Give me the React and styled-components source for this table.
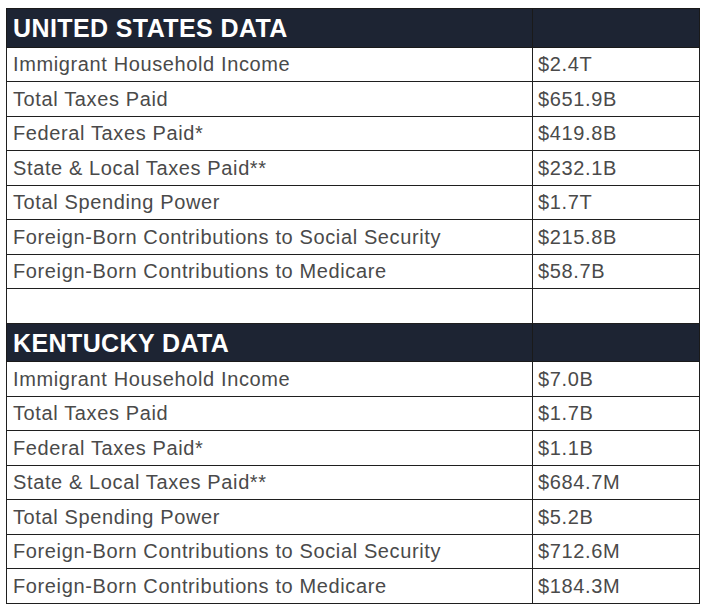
import styled, { createGlobalStyle } from "styled-components";

const Global = createGlobalStyle`
  html, body {
    margin: 0;
    padding: 0;
    background: #ffffff;
  }
`;

const us = [
  ["Immigrant Household Income", "$2.4T"],
  ["Total Taxes Paid", "$651.9B"],
  ["Federal Taxes Paid*", "$419.8B"],
  ["State & Local Taxes Paid**", "$232.1B"],
  ["Total Spending Power", "$1.7T"],
  ["Foreign-Born Contributions to Social Security", "$215.8B"],
  ["Foreign-Born Contributions to Medicare", "$58.7B"],
];

const ky = [
  ["Immigrant Household Income", "$7.0B"],
  ["Total Taxes Paid", "$1.7B"],
  ["Federal Taxes Paid*", "$1.1B"],
  ["State & Local Taxes Paid**", "$684.7M"],
  ["Total Spending Power", "$5.2B"],
  ["Foreign-Born Contributions to Social Security", "$712.6M"],
  ["Foreign-Born Contributions to Medicare", "$184.3M"],
];

const Page = styled.div`
  padding: 8px 0 0 6px;
`;

const Table = styled.table`
  width: 693px;
  border-collapse: collapse;
  table-layout: fixed;
  font-family: "Liberation Sans", Arial, sans-serif;
`;

const HeadRow = styled.tr`
  height: 38.5px;
  background: #1d2433;
`;

const HeadCell = styled.th`
  border: 1px solid #1a1a1a;
  padding: 2px 0 0 6px;
  text-align: left;
  color: #ffffff;
  font-size: 25px;
  font-weight: 700;
  text-transform: uppercase;
  letter-spacing: 0.4px;
`;

const Row = styled.tr`
  height: 34.5px;
`;

const Cell = styled.td`
  border: 1px solid #1f1f1f;
  padding: 1px 0 0 ${(p) => (p.$value ? "5px" : "6px")};
  color: #4a4a4a;
  font-size: 20px;
  letter-spacing: 0.62px;
  white-space: nowrap;
`;

const Section = ({ title, rows }) => (
  <>
    <HeadRow>
      <HeadCell>{title}</HeadCell>
      <HeadCell />
    </HeadRow>
    {rows.map(([label, value]) => (
      <Row key={label}>
        <Cell>{label}</Cell>
        <Cell $value>{value}</Cell>
      </Row>
    ))}
  </>
);

export default function App() {
  return (
    <Page>
      <Global />
      <Table>
        <colgroup>
          <col style={{ width: "526px" }} />
          <col style={{ width: "167px" }} />
        </colgroup>
        <tbody>
          <Section title="United States Data" rows={us} />
          <Row>
            <Cell />
            <Cell $value />
          </Row>
          <Section title="Kentucky Data" rows={ky} />
        </tbody>
      </Table>
    </Page>
  );
}
